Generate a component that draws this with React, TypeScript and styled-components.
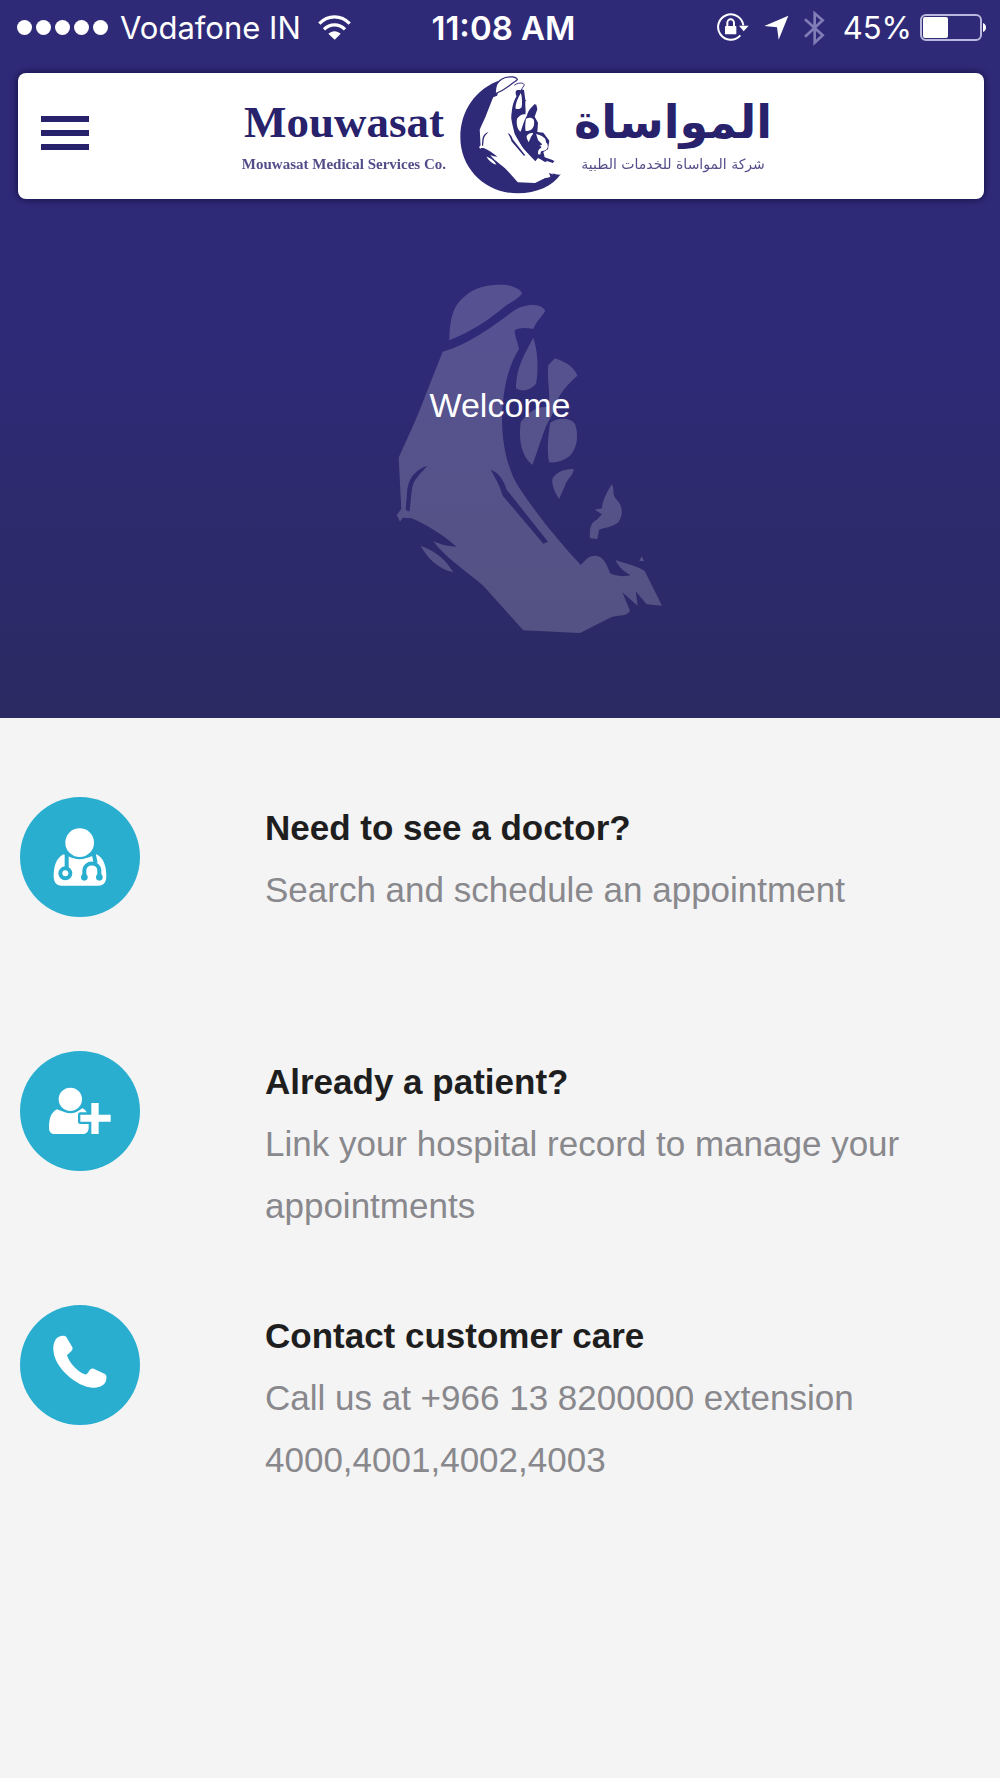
import React from "react";
import styled, { createGlobalStyle } from "styled-components";

const NAVY = "#2f2a78";
const INK = "#28216b";
const TEAL = "#29aed0";

const GlobalStyle = createGlobalStyle`
  *, *::before, *::after { box-sizing: border-box; }
  html { min-height: 100%; background: #f4f4f4; }
  body {
    margin: 0;
    background: #f4f4f4;
    font-family: "Liberation Sans", Arial, sans-serif;
  }
`;

const Top = styled.div`
  background: linear-gradient(${NAVY} 0%, #2f2a78 45%, #2b2a62 100%);
`;

const StatusBar = styled.div`
  display: grid;
  grid-template-columns: 1fr auto 1fr;
  align-items: center;
  height: 55px;
  padding: 0 14px 0 17px;
  color: #fff;
  font-family: Inter, Roboto, sans-serif;
  font-size: 31px;
  line-height: 40px;
`;

const StatusGroup = styled.div<{ $end?: boolean }>`
  display: flex;
  align-items: center;
  justify-content: ${(p) => (p.$end ? "flex-end" : "flex-start")};
  gap: ${(p) => (p.$end ? "8px" : "12px")};
  white-space: nowrap;
`;

const StatusIcons = styled.div`
  display: flex;
  align-items: center;
  gap: 15px;
  padding-right: 10px;
`;

const Dots = styled.span`
  display: flex;
  gap: 4px;
`;

const Dot = styled.span`
  width: 15px;
  height: 15px;
  border-radius: 50%;
  background: #fff;
`;

const Carrier = styled.span`
  padding-right: 5px;
`;

const Clock = styled.time`
  padding-left: 4px;
  font-weight: 600;
  font-size: 33px;
`;

const Header = styled.header`
  display: grid;
  grid-template-columns: 1fr auto 1fr;
  align-items: center;
  height: 126px;
  margin: 18px 16px 0 18px;
  padding: 0 22px;
  border-radius: 8px;
  background: #fff;
  box-shadow: 0 0 6px 1px rgba(10, 8, 50, 0.7);
`;

const MenuButton = styled.button`
  display: flex;
  flex-direction: column;
  justify-content: center;
  gap: 8px;
  width: 50px;
  height: 56px;
  padding: 0 1px 7px;
  border: 0;
  background: none;
  cursor: pointer;
`;

const MenuBar = styled.span`
  height: 6px;
  background: ${INK};
`;

const Brand = styled.div`
  display: flex;
  align-items: center;
  gap: 13px;
  padding-left: 12px;
  color: ${INK};
  white-space: nowrap;
`;

const BrandText = styled.div<{ $arabic?: boolean }>`
  display: flex;
  flex-direction: column;
  align-items: center;
  padding-top: 4px;
  font-family: ${(p) =>
    p.$arabic
      ? '"DejaVu Sans", sans-serif'
      : '"Liberation Serif", "Times New Roman", serif'};
  font-weight: 700;
`;

const BrandName = styled.span<{ $size: number }>`
  font-size: ${(p) => p.$size}px;
  line-height: 52px;
`;

const BrandLine = styled.span<{ $size: number; $light?: boolean }>`
  font-size: ${(p) => p.$size}px;
  font-weight: ${(p) => (p.$light ? 400 : 700)};
  line-height: 32px;
  opacity: 0.8;
`;

const Hero = styled.section`
  display: grid;
  justify-items: center;
  align-items: center;
  height: 519px;
`;

const Watermark = styled.svg`
  grid-area: 1 / 1;
  fill: #fff;
  opacity: 0.19;
`;

const Welcome = styled.h1`
  grid-area: 1 / 1;
  align-self: start;
  margin: 0;
  padding-top: 186px;
  color: #fff;
  font-size: 34px;
  font-weight: 400;
  line-height: 40px;
`;

const Options = styled.ul`
  margin: 0;
  padding: 79px 20px 0;
  list-style: none;
`;

const Option = styled.a`
  display: grid;
  grid-template-columns: 245px 1fr;
  align-items: start;
  min-height: 254px;
  color: inherit;
  text-decoration: none;
`;

const Badge = styled.span`
  display: grid;
  place-items: center;
  width: 120px;
  height: 120px;
  border-radius: 50%;
  background: ${TEAL};
`;

const OptionTitle = styled.h2`
  margin: 0;
  color: #1e1e1f;
  font-size: 35px;
  font-weight: 700;
  line-height: 62px;
`;

const OptionText = styled.p`
  margin: 0;
  color: #88888d;
  font-size: 35px;
  line-height: 62px;
`;

const CAP =
  "M238 244 C240 150 262 128 300 100 C335 78 380 76 410 78 C438 84 454 94 456 104 C445 118 425 128 405 142 C360 180 310 215 238 244 Z";
const ROBE =
  "M218 278 C300 255 370 200 425 160 C450 140 480 136 500 139 C515 142 525 150 525 157 C515 175 500 185 490 210 C470 206 445 205 434 214 C434 232 442 245 447 270 C410 330 398 400 396 480 C396 560 415 640 450 690 C510 780 570 850 632 918 C645 905 655 890 676 890 C705 892 712 925 722 944 C740 950 765 955 782 948 C765 940 745 925 737 903 C770 915 800 920 824 936 L876 1040 L830 1036 L797 997 L803 1040 L757 1000 L780 1055 C770 1075 740 1066 720 1076 L630 1122 L460 1114 L340 980 C280 930 220 890 190 846 C215 858 235 862 260 863 C215 825 165 795 125 778 L98 776 L90 788 L80 768 L94 750 L86 596 C115 530 140 480 160 425 Z";
const FAMILY =
  "M490 236 C505 280 505 340 498 375 C480 395 455 400 438 388 C440 330 455 300 490 236 Z M535 318 L555 298 C590 310 612 325 622 350 C590 380 570 400 555 440 C550 470 535 480 525 510 C510 550 498 590 487 618 C455 590 445 550 452 490 C475 460 500 440 536 445 C542 400 530 360 535 318 Z M540 492 C565 475 600 475 615 495 C628 530 620 570 600 590 C580 605 560 612 537 610 C530 570 535 530 540 492 Z M547 660 C560 635 590 630 611 630 C610 650 590 660 585 680 L567 720 C555 700 545 680 547 660 Z";
const CHILD =
  "M725 676 C735 690 725 705 738 720 C760 740 760 770 745 790 C725 805 705 806 687 812 L682 840 L660 838 C658 810 662 790 680 782 L696 766 L674 752 L696 748 C698 720 712 700 725 676 Z M815 892 L822 906 L808 906 Z M152 860 C185 872 225 895 250 940 C205 930 170 895 152 860 Z";
const SLEEVE =
  "M172 620 C140 632 118 650 112 690 L107 752 L118 758 C124 730 122 690 132 670 C145 645 158 638 172 620 Z";
const FOLD =
  "M362 632 C385 640 400 660 410 692 L534 848 L520 854 L398 710 C390 680 375 655 362 632 Z";

const HeroWatermark = () => (
  <Watermark width="324" height="349" viewBox="-96 75 972 1047" aria-hidden="true">
    <mask id="creases">
      <rect x="-96" y="75" width="972" height="1050" fill="#fff" />
      <path d={SLEEVE} fill="#000" />
      <path d={FOLD} fill="#000" />
    </mask>
    <g mask="url(#creases)">
      <path d={CAP} />
      <path d={ROBE} />
      <path d={FAMILY} />
      <path d={CHILD} />
    </g>
  </Watermark>
);

const Emblem = () => (
  <svg width="102" height="120" viewBox="55 46 306 360" aria-hidden="true">
    <path
      fill={NAVY}
      d="M180 58 C105 84 59 150 59 230 C59 325 135 398 230 398 C290 398 335 376 360 341 L325 338 L240 355 L140 240 Z"
    />
    <path
      fill={NAVY}
      d="M226 90 L236 84 L250 88 L254 118 L272 128 L287 132 L290 146 L282 168 L292 186 L290 214 L308 216 L326 240 L322 266 L308 274 L312 290 L342 300 L336 308 L312 303 L292 292 L284 302 L246 262 L222 220 L210 170 L216 120 Z"
    />
    <g transform="translate(91 25) scale(0.305)" fill="#fff">
      <path d={ROBE} />
      <path d={CAP} stroke={NAVY} strokeWidth="12" />
      <path
        d="M425 160 C450 140 480 136 500 139 C515 142 525 150 525 157 L490 210"
        fill="none"
        stroke={NAVY}
        strokeWidth="9"
      />
      <path d={FAMILY} />
      <path d={CHILD} />
      <path d="M640 640 C690 650 720 670 735 700 L725 770 L690 800 L700 740 L660 700 Z" />
      <path d={SLEEVE} fill={NAVY} />
      <path d={FOLD} fill={NAVY} />
    </g>
  </svg>
);

const WifiIcon = () => (
  <svg width="33" height="25" viewBox="0 0 99 75" aria-hidden="true">
    <g fill="none" stroke="#fff" strokeWidth="10">
      <path d="M4 26 C30 -1 69 -1 95 26" />
      <path d="M18 43 C36 25 63 25 81 43" />
    </g>
    <path d="M31 56 C42 46 57 46 68 56 L50 74 Z" fill="#fff" />
  </svg>
);

const RotationLockIcon = () => (
  <svg width="32" height="29" viewBox="0 0 96 87" aria-hidden="true">
    <path d="M70 67 A38 38 0 1 1 79 37" fill="none" stroke="#fff" strokeWidth="6" />
    <path d="M66 38 L95 38 L80 55 Z" fill="#fff" />
    <rect x="24" y="39" width="34" height="25" rx="2" fill="#fff" />
    <path d="M31 40 V30 A10 11 0 0 1 51 30 V40" fill="none" stroke="#fff" strokeWidth="6" />
  </svg>
);

const LocationIcon = () => (
  <svg width="25" height="25" viewBox="0 0 75 75" aria-hidden="true">
    <path d="M73 2 L44 74 L39 37 L1 33 Z" fill="#fff" />
  </svg>
);

const BluetoothIcon = () => (
  <svg width="21" height="36" viewBox="0 0 63 108" aria-hidden="true">
    <path
      d="M3 28 L56 76 L32 98 V10 L56 31 L3 80"
      fill="none"
      stroke="#817db6"
      strokeWidth="8"
    />
  </svg>
);

const BatteryIcon = () => (
  <svg width="66" height="27" viewBox="0 0 66 27" aria-hidden="true">
    <rect x="1" y="1" width="60" height="25" rx="5" fill="none" stroke="#b9b7dc" strokeWidth="2" />
    <rect x="3" y="3" width="25" height="21" rx="2" fill="#fff" />
    <path d="M63 9 C67 10 67 17 63 18 Z" fill="#fff" />
  </svg>
);

const DoctorIcon = () => (
  <svg width="54" height="60" viewBox="0 0 162 180" aria-hidden="true">
    <path
      d="M32 82 C60 99 100 99 130 82 C152 92 160 118 160 148 C160 166 152 176 136 176 H26 C10 176 2 166 2 148 C2 118 10 92 32 82 Z"
      fill="#fff"
    />
    <g fill="none" stroke={TEAL} strokeWidth="12">
      <path d="M41 80 V124" />
      <circle cx="37" cy="139" r="15" />
      <path d="M122 80 L128 108" />
      <path d="M94 152 V132 C94 102 139 102 139 132 V152" />
    </g>
    <circle cx="94" cy="151" r="10" fill={TEAL} />
    <circle cx="139" cy="151" r="10" fill={TEAL} />
    <circle cx="80" cy="47" r="50" fill={TEAL} />
    <circle cx="80" cy="47" r="43" fill="#fff" />
  </svg>
);

const AddPatientIcon = () => (
  <svg width="62" height="48" viewBox="0 0 186 144" aria-hidden="true">
    <path
      d="M24 67 C50 80 80 80 100 64 C112 68 119 84 119 100 V122 C119 133 113 141 102 141 H18 C6 141 0 134 0 122 C0 96 6 76 24 67 Z"
      fill="#fff"
    />
    <circle cx="64" cy="37" r="42" fill={TEAL} />
    <circle cx="64" cy="37" r="35" fill="#fff" />
    <path
      d="M127 48 H149 V83 H185 V104 H149 V141 H127 V104 H94 V83 H127 Z"
      fill={TEAL}
      stroke={TEAL}
      strokeWidth="14"
      strokeLinejoin="round"
    />
    <path d="M127 48 H149 V83 H185 V104 H149 V141 H127 V104 H94 V83 H127 Z" fill="#fff" />
  </svg>
);

const PhoneIcon = () => (
  <svg width="54" height="60" viewBox="0 0 162 180" aria-hidden="true">
    <path
      d="M18 5 C27 1 36 1 40 6 L58 37 C60 43 57 47 52 51 L42 61 C48 83 75 112 96 118 C101 119 104 115 108 108 C112 101 116 99 122 101 L156 117 C162 121 161 132 158 140 C152 153 136 158 118 158 C75 157 -2 97 1 38 C2 21 8 9 18 5 Z"
      fill="#fff"
    />
  </svg>
);

const options = [
  {
    icon: <DoctorIcon />,
    title: "Need to see a doctor?",
    text: "Search and schedule an appointment",
    href: "#doctor",
  },
  {
    icon: <AddPatientIcon />,
    title: "Already a patient?",
    text: "Link your hospital record to manage your appointments",
    href: "#patient",
  },
  {
    icon: <PhoneIcon />,
    title: "Contact customer care",
    text: "Call us at +966 13 8200000 extension 4000,4001,4002,4003",
    href: "tel:+966138200000",
  },
];

export default function App() {
  return (
    <>
      <GlobalStyle />
      <Top>
        <StatusBar>
          <StatusGroup>
            <Dots>
              {[0, 1, 2, 3, 4].map((n) => (
                <Dot key={n} />
              ))}
            </Dots>
            <Carrier>Vodafone IN</Carrier>
            <WifiIcon />
          </StatusGroup>
          <Clock>11:08 AM</Clock>
          <StatusGroup $end>
            <StatusIcons>
              <RotationLockIcon />
              <LocationIcon />
              <BluetoothIcon />
            </StatusIcons>
            <span>45%</span>
            <BatteryIcon />
          </StatusGroup>
        </StatusBar>
        <Header>
          <MenuButton type="button" aria-label="Menu">
            <MenuBar />
            <MenuBar />
            <MenuBar />
          </MenuButton>
          <Brand>
            <BrandText>
              <BrandName $size={45}>Mouwasat</BrandName>
              <BrandLine $size={15}>Mouwasat Medical Services Co.</BrandLine>
            </BrandText>
            <Emblem />
            <BrandText $arabic lang="ar" dir="rtl">
              <BrandName $size={46}>المواساة</BrandName>
              <BrandLine $size={14} $light>
                شركة المواساة للخدمات الطبية
              </BrandLine>
            </BrandText>
          </Brand>
        </Header>
        <Hero>
          <HeroWatermark />
          <Welcome>Welcome</Welcome>
        </Hero>
      </Top>
      <main>
        <Options>
          {options.map((o) => (
            <li key={o.title}>
              <Option href={o.href}>
                <Badge>{o.icon}</Badge>
                <div>
                  <OptionTitle>{o.title}</OptionTitle>
                  <OptionText>{o.text}</OptionText>
                </div>
              </Option>
            </li>
          ))}
        </Options>
      </main>
    </>
  );
}
